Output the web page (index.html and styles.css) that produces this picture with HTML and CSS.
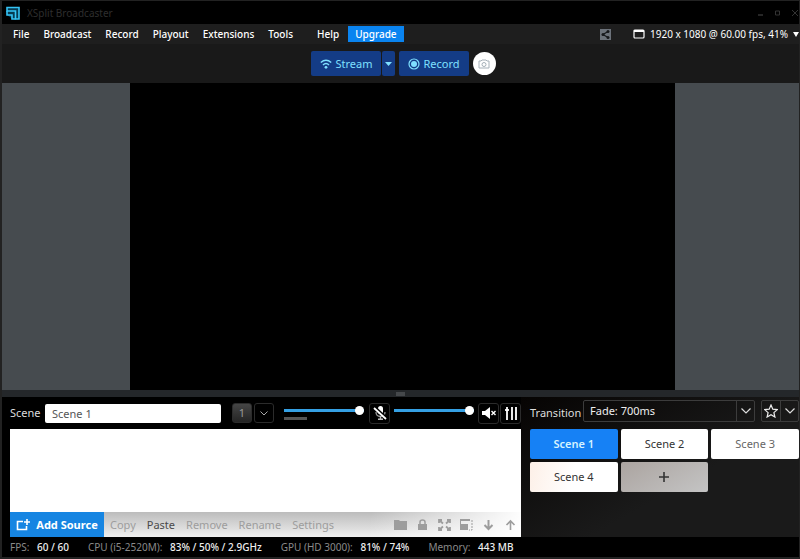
FILE: index.html
```html
<!DOCTYPE html>
<html lang="en">
<head>
    <meta charset="UTF-8">
    <title>XSplit Broadcaster</title>
    <link rel="stylesheet" href="styles.css">
</head>
<body>
    <div class="app">
        <header class="titlebar">
            <svg class="logo" viewBox="0 0 14 14" width="14" height="14">
                <path d="M1 1.500h12v11.500H6.500L1 9z" fill="#063a50"/>
                <path d="M1 5V1.500h12V13H9.500V5z" fill="none" stroke="#35c4f5" stroke-width="1.600"/>
                <path d="M1 5v4h5v4h3.500" fill="none" stroke="#35c4f5" stroke-width="1.600"/>
            </svg>
            <h1>XSplit Broadcaster</h1>
            <div class="window-buttons">
                <button type="button" aria-label="Minimize"><svg viewBox="0 0 8 8" width="8" height="8"><path d="M1 6h5" stroke="currentColor" stroke-width="1.5"/></svg></button>
                <button type="button" aria-label="Maximize"><svg viewBox="0 0 8 8" width="8" height="8"><path d="M1.500 2h4v4h-4z" fill="none" stroke="currentColor"/></svg></button>
                <button type="button" aria-label="Close"><svg viewBox="0 0 8 8" width="8" height="8"><path d="M1 1l6 6M7 1L1 7" stroke="currentColor"/></svg></button>
            </div>
        </header>

        <nav class="menubar">
            <a href="#">File</a>
            <a href="#">Broadcast</a>
            <a href="#">Record</a>
            <a href="#">Playout</a>
            <a href="#">Extensions</a>
            <a href="#">Tools</a>
            <a href="#" class="help">Help</a>
            <button type="button" class="upgrade">Upgrade</button>
            <button type="button" class="share" aria-label="Share">
                <svg viewBox="0 0 11 11" width="11" height="11">
                    <path d="M0 0h11v11H0z" fill="#6c727a"/>
                    <path d="M8 2.500L3 5.500l5 3" fill="none" stroke="#16181b" stroke-width="1.200"/>
                    <circle cx="8" cy="2.500" r="1.500" fill="#16181b"/><circle cx="3" cy="5.500" r="1.500" fill="#16181b"/><circle cx="8" cy="8.500" r="1.500" fill="#16181b"/>
                </svg>
            </button>
            <button type="button" class="resolution">
                <svg viewBox="0 0 12 10" width="12" height="10"><rect x="1" y="1" width="10" height="8" rx="1" fill="none" stroke="#fff" stroke-width="1.200"/><path d="M1 2h10" stroke="#fff" stroke-width="2"/></svg>
                <span>1920 x 1080 @ 60.00 fps, 41%</span>
                <svg viewBox="0 0 6 5" width="6" height="5"><path d="M0 0h6L3 5z" fill="#fff"/></svg>
            </button>
        </nav>

        <div class="toolbar">
            <div class="split">
                <button type="button" class="action">
                    <svg viewBox="0 0 12 10" width="12" height="10"><g fill="none" stroke="currentColor" stroke-width="1.500"><path d="M.800 3.500Q6-1 11.200 3.500M3 6q3-3 6 0"/></g><circle cx="6" cy="8.300" r="1.400" fill="currentColor"/></svg>
                    Stream
                </button>
                <button type="button" class="action more" aria-label="Stream options"><svg viewBox="0 0 7 4" width="7" height="4"><path d="M0 0h7L3.500 4z" fill="currentColor"/></svg></button>
            </div>
            <button type="button" class="action">
                <svg viewBox="0 0 12 12" width="12" height="12"><circle cx="6" cy="6" r="5" fill="none" stroke="currentColor" stroke-width="1.200"/><circle cx="6" cy="6" r="3" fill="currentColor"/></svg>
                Record
            </button>
            <button type="button" class="snapshot" aria-label="Take screenshot">
                <svg viewBox="0 0 12 10" width="12" height="10"><path d="M1 2h2l1-1h4l1 1h2v7H1z" fill="none" stroke="currentColor"/><circle cx="6" cy="5.500" r="2" fill="none" stroke="currentColor"/></svg>
            </button>
        </div>

        <main class="preview">
            <div class="stage"></div>
        </main>
        <div class="splitter"></div>

        <div class="panels">
            <section class="sources">
                <div class="controls">
                    <label for="scene-name">Scene</label>
                    <input type="text" id="scene-name" value="Scene 1">
                    <button type="button" class="preset active">1</button>
                    <button type="button" class="preset open" aria-label="Presets"><svg viewBox="0 0 8 5" width="8" height="5"><path d="M.500.500L4 4 7.500.500" fill="none" stroke="#aaa"/></svg></button>
                    <div class="level">
                        <input type="range" aria-label="Microphone volume" min="0" max="100" value="100">
                        <span class="meter"></span>
                    </div>
                    <button type="button" class="tool" aria-label="Mute microphone">
                        <svg viewBox="0 0 14 14" width="14" height="14"><rect x="5" y="0" width="5" height="8" rx="2.500" fill="#fff"/><path d="M3 6q0 4.500 4.500 4.500T12 6" fill="none" stroke="#999" stroke-width="1.300"/><path d="M7.500 10v3M5 13.300h5" stroke="#bbb" stroke-width="1.400"/><path d="M2 1l12 11" stroke="#000" stroke-width="2"/><path d="M1 2l12 11" stroke="#fff" stroke-width="1.800"/></svg>
                    </button>
                    <div class="level">
                        <input type="range" aria-label="Speaker volume" min="0" max="100" value="100">
                    </div>
                    <div class="tool-pair">
                        <button type="button" class="tool" aria-label="Mute speakers">
                            <svg viewBox="0 0 14 14" width="14" height="14"><path d="M0 5h3l5-4v12L3 9H0z" fill="#fff"/><path d="M9.500 5l4 4M13.500 5l-4 4" stroke="#fff" stroke-width="1.400"/></svg>
                        </button>
                        <button type="button" class="tool" aria-label="Audio mixer">
                            <svg viewBox="0 0 14 14" width="14" height="14"><path d="M3 1v13M8 1v13M12 1v13" stroke="#fff" stroke-width="1.800"/><path d="M1 4h4" stroke="#fff" stroke-width="1.800"/></svg>
                        </button>
                    </div>
                </div>
                <div class="source-list"></div>
                <div class="source-actions">
                    <button type="button" class="add">
                        <svg viewBox="0 0 14 12" width="14" height="12"><path d="M7 2.500H1.500v8h9V7M11 0v6M8 3h6" fill="none" stroke="#fff" stroke-width="1.600"/></svg>
                        Add Source
                    </button>
                    <button type="button">Copy</button>
                    <button type="button" class="enabled">Paste</button>
                    <button type="button">Remove</button>
                    <button type="button">Rename</button>
                    <button type="button">Settings</button>
                    <div class="icons">
                        <button type="button" aria-label="Group"><svg viewBox="0 0 13 12" width="13" height="12"><path d="M0 1h5l1 1h7v9H0z" fill="currentColor"/></svg></button>
                        <button type="button" aria-label="Lock"><svg viewBox="0 0 13 12" width="13" height="12"><rect x="2" y="5" width="9" height="6" fill="currentColor"/><path d="M4 5V3q0-2 2.500-2T9 3v2" fill="none" stroke="currentColor" stroke-width="1.500"/></svg></button>
                        <button type="button" aria-label="Fit to screen"><svg viewBox="0 0 13 12" width="13" height="12"><path d="M1 4V1h3M9 1h3v3M12 8v3H9M4 11H1V8M1 1l4 3.500M12 1L8 4.500M12 11L8 7.500M1 11l4-3.500" fill="none" stroke="currentColor" stroke-width="1.800"/></svg></button>
                        <button type="button" aria-label="Restore size"><svg viewBox="0 0 13 12" width="13" height="12"><path d="M12 1v10H9" fill="none" stroke="currentColor" stroke-dasharray="2 1"/><path d="M0 5h8v6H0zM0 0h10v2H1v3H0z" fill="currentColor"/></svg></button>
                        <button type="button" aria-label="Move down"><svg viewBox="0 0 13 12" width="13" height="12"><path d="M6.500 1v9M2.500 6l4 4 4-4" fill="none" stroke="currentColor" stroke-width="2"/></svg></button>
                        <button type="button" aria-label="Move up"><svg viewBox="0 0 13 12" width="13" height="12"><path d="M6.500 11V2M2.500 6l4-4 4 4" fill="none" stroke="currentColor" stroke-width="1.600"/></svg></button>
                    </div>
                </div>
            </section>

            <section class="scenes">
                <div class="controls">
                    <label for="transition">Transition</label>
                    <div class="select-box">
                        <select id="transition">
                            <option>Fade: 700ms</option>
                        </select>
                        <span class="arrow"><svg viewBox="0 0 10 6" width="10" height="6"><path d="M.500.500L5 5 9.500.500" fill="none" stroke="#ddd" stroke-width="1.200"/></svg></span>
                    </div>
                    <div class="favorite">
                        <button type="button" aria-label="Favorite"><svg viewBox="0 0 14 14" width="14" height="14"><path d="M7 1l1.800 4.200 4.500.400-3.400 3 1 4.400L7 10.700 3.100 13l1-4.400-3.400-3 4.500-.400z" fill="none" stroke="#eee" stroke-width="1.200"/></svg></button>
                        <button type="button" aria-label="Favorites list"><svg viewBox="0 0 10 6" width="10" height="6"><path d="M.500.500L5 5 9.500.500" fill="none" stroke="#ddd" stroke-width="1.200"/></svg></button>
                    </div>
                </div>
                <div class="scene-grid">
                    <button type="button" class="current">Scene 1</button>
                    <button type="button">Scene 2</button>
                    <button type="button" class="faded">Scene 3</button>
                    <button type="button" class="warm">Scene 4</button>
                    <button type="button" class="new" aria-label="Add scene"><svg viewBox="0 0 10 10" width="10" height="10"><path d="M5 0v10M0 5h10" stroke="#333" stroke-width="1.600"/></svg></button>
                </div>
            </section>
        </div>

        <footer class="status">
            <span>FPS: <b>60 / 60</b></span>
            <span>CPU (i5-2520M): <b>83% / 50% / 2.9GHz</b></span>
            <span>GPU (HD 3000): <b>81% / 74%</b></span>
            <span>Memory: <b>443 MB</b></span>
        </footer>
    </div>
</body>
</html>
```
FILE: styles.css
```css
* {
    box-sizing: border-box;
}

body {
    margin: 0;
    background: #000;
    color: #fff;
    font-family: "Noto Sans", "Open Sans", sans-serif;
    font-size: 11px;
    line-height: 16px;
}

button, input, select {
    margin: 0;
    padding: 0;
    border: none;
    background: none;
    color: inherit;
    font: inherit;
}

button {
    display: flex;
    align-items: center;
    justify-content: center;
    white-space: nowrap;
}

svg {
    display: block;
    flex: none;
}

.app {
    display: flex;
    flex-direction: column;
    height: 100vh;
    overflow: hidden;
    border: 1px solid #222;
    border-width: 1px 1px 2px 2px;
}

.titlebar {
    display: flex;
    align-items: center;
    height: 23px;
    padding: 0 0 0 4px;
    gap: 7px;
}

.titlebar h1 {
    margin: 0;
    color: #2e2e2e;
    font-size: 10px;
    font-weight: 400;
}

.window-buttons {
    display: flex;
    gap: 9px;
    margin-left: auto;
    color: #333;
}

.menubar {
    display: flex;
    align-items: center;
    height: 20px;
    padding-left: 11px;
    gap: 14px;
    background: #1e1e1e;
    font-weight: 500;
    font-size: 10px;
}

.menubar a {
    color: #fff;
    text-decoration: none;
}

.menubar .help {
    margin-left: 10px;
}

.upgrade {
    height: 16px;
    padding: 0 7px;
    margin-left: -5px;
    background: #0a84f0;
}

.share {
    margin-left: auto;
}

.resolution {
    gap: 5px;
    margin-left: 8px;
    font-weight: 400;
}

.toolbar {
    display: flex;
    align-items: center;
    justify-content: center;
    height: 39px;
    gap: 4px;
    padding-left: 6px;
    background: #191919;
}

.split {
    display: flex;
    gap: 1px;
}

.action {
    height: 25px;
    padding: 0 9px;
    gap: 3px;
    border-radius: 2px;
    background: #143c86;
    color: #7fe0ff;
}

.action.more {
    padding: 0 3px;
}

.snapshot {
    width: 23px;
    height: 23px;
    border-radius: 50%;
    background: #fff;
    color: #a5b0b8;
}

.preview {
    display: flex;
    flex: 1;
    justify-content: center;
    min-height: 0;
    padding-left: 4px;
    background: #464b4f;
}

.stage {
    height: 100%;
    aspect-ratio: 16 / 9;
    background: #000;
}

.splitter {
    display: flex;
    align-items: center;
    justify-content: center;
    height: 7px;
    background: #24272a;
}

.splitter::after {
    content: "";
    width: 9px;
    height: 4px;
    background: #45484b;
}

.panels {
    display: grid;
    grid-template-columns: minmax(0, 1fr) 278px;
    height: 140px;
}

.sources {
    display: flex;
    flex-direction: column;
    padding-left: 8px;
}

.controls {
    display: flex;
    align-items: center;
    flex: none;
    height: 32px;
    color: #ddd;
}

.sources .controls label {
    width: 35px;
}

.controls input[type="text"] {
    flex: 1;
    min-width: 0;
    height: 19px;
    padding: 0 7px;
    border-radius: 2px;
    background: #fff;
    color: #555;
}

.preset {
    width: 20px;
    height: 20px;
    border: 1px solid #2b2b2b;
    border-radius: 3px;
}

.preset.active {
    margin-left: 11px;
    background: linear-gradient(#454545, #242424);
    color: #999;
}

.preset.open {
    margin: 0 10px 0 2px;
}

.level {
    display: flex;
    flex-direction: column;
    width: 80px;
    height: 14px;
}

.level input {
    width: 80px;
    height: 9px;
    appearance: none;
}

.level input::-webkit-slider-runnable-track {
    height: 3px;
    background: #35a0e4;
}

.level input::-webkit-slider-thumb {
    width: 9px;
    height: 9px;
    margin-top: -3px;
    border-radius: 50%;
    background: #fff;
    appearance: none;
}

.meter {
    width: 23px;
    height: 3px;
    margin-top: 2px;
    background: #555;
}

.tool {
    width: 21px;
    height: 21px;
    border: 1px solid #2b2b2b;
    border-radius: 3px;
}

.level + .tool {
    margin: 0 4px 0 5px;
}

.tool-pair {
    display: flex;
    gap: 1px;
    margin-left: 4px;
}

.source-list {
    flex: 1;
    background: #fff;
}

.source-actions {
    display: flex;
    height: 25px;
    padding-right: 4px;
    background: linear-gradient(100deg, transparent 70%, #fff), linear-gradient(#bcbcbc, #efefef);
    color: #9d9d9d;
}

.source-actions > button {
    margin-right: 11px;
}

.source-actions > .add {
    width: 94px;
    margin-right: 6px;
    gap: 6px;
    background: #1685e2;
    color: #fff;
    font-weight: 700;
}

.source-actions .enabled {
    color: #4a4a4a;
}

.icons {
    display: flex;
    gap: 9px;
    margin-left: auto;
}

.scenes {
    min-width: 0;
    padding-left: 9px;
    overflow: hidden;
    background: linear-gradient(150deg, #060403, #1a1a1a 60%);
}

.scenes .controls {
    padding-bottom: 4px;
}

.scenes .controls label {
    width: 53px;
    padding-top: 4px;
}

.select-box, .favorite {
    display: flex;
    height: 22px;
    border: 1px solid #3c3c3c;
    border-radius: 2px;
}

.select-box {
    flex: 1;
}

.select-box select {
    flex: 1;
    min-width: 0;
    padding: 0 6px;
    color: #eee;
    appearance: none;
}

.arrow, .favorite button {
    display: flex;
    align-items: center;
    justify-content: center;
    width: 18px;
}

.arrow, .favorite button + button {
    border-left: 1px solid #3c3c3c;
}

.favorite {
    margin-left: 6px;
}

.scene-grid {
    display: grid;
    grid-template-columns: repeat(3, 1fr);
    grid-auto-rows: 30px;
    gap: 3px;
}

.scene-grid button {
    border-radius: 2px;
    background: #fff;
    color: #333;
}

.scene-grid .current {
    background: #1681f5;
    color: #d5f3ff;
    font-weight: 600;
}

.scene-grid .faded {
    color: #666;
}

.scene-grid .warm {
    background: linear-gradient(100deg, #fdf0e8, #fff 50%);
}

.scene-grid .new {
    background: linear-gradient(150deg, #aba4a0, #c4c4c4);
}

.status {
    display: flex;
    align-items: center;
    height: 20px;
    padding-left: 8px;
    gap: 19px;
    color: #8a8a8a;
    font-size: 10px;
    white-space: nowrap;
}

.status b {
    margin-left: 5px;
    color: #eee;
    font-weight: 500;
}
```
